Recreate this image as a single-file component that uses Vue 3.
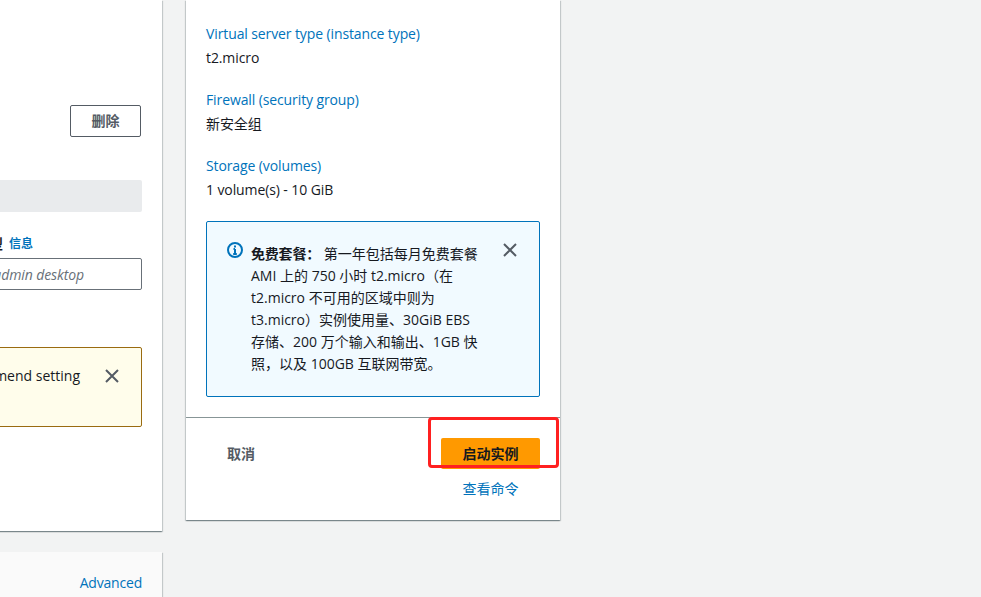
<script setup>
const summary = [
    { label: "Virtual server type (instance type)", value: "t2.micro" },
    { label: "Firewall (security group)", value: "新安全组" },
    { label: "Storage (volumes)", value: "1 volume(s) - 10 GiB" },
];
</script>

<template>
    <div class="page">
        <div class="left">
            <div class="left-inner">
                <section class="card main-card">
                    <div class="delete-row">
                        <button class="btn-outline">删除</button>
                    </div>
                    <div class="gray-bar"></div>
                    <div class="field-label">
                        <span>描述类型</span>
                        <a class="info-link">信息</a>
                    </div>
                    <input class="text-input" placeholder="e.g. admin desktop" />
                    <div class="warning">
                        <span class="warning-text">We recommend setting</span>
                        <svg class="close" viewBox="0 0 16 16" width="16" height="16">
                            <path d="M2 2l12 12M14 2L2 14" />
                        </svg>
                    </div>
                </section>
                <section class="card advanced-card">
                    <a class="advanced-link">Advanced</a>
                </section>
            </div>
        </div>

        <aside class="card summary">
            <div class="summary-body">
                <div v-for="item in summary" :key="item.label" class="summary-item">
                    <a class="summary-label">{{ item.label }}</a>
                    <div class="summary-value">{{ item.value }}</div>
                </div>
                <div class="free-tier">
                    <svg class="info-icon" viewBox="0 0 16 16" width="16" height="16">
                        <circle cx="8" cy="8" r="7" />
                        <path d="M8 7v5M6.2 12h3.6M6.5 7H8" />
                        <path class="dot" d="M7 3.5h2v2H7z" />
                    </svg>
                    <p class="free-text">
                        <strong>免费套餐：</strong> 第一年包括每月免费套餐 AMI 上的 750 小时 t2.micro（在 t2.micro 不可用的区域中则为 t3.micro）实例使用量、30GiB EBS 存储、200 万个输入和输出、1GB 快照，以及 100GB 互联网带宽。
                    </p>
                    <svg class="close" viewBox="0 0 16 16" width="16" height="16">
                        <path d="M2 2l12 12M14 2L2 14" />
                    </svg>
                </div>
            </div>
            <div class="summary-footer">
                <a class="cancel">取消</a>
                <div class="launch">
                    <button class="btn-primary">启动实例</button>
                    <a class="preview">查看命令</a>
                </div>
            </div>
            <div class="red-mark"></div>
        </aside>
    </div>
</template>

<style>
html,
body {
    margin: 0;
    background: #f2f3f3;
}
</style>

<style scoped>
.page {
    display: flex;
    align-items: flex-start;
    gap: 24px;
    height: 597px;
    overflow: hidden;
    background: #f2f3f3;
    font-family: "Open Sans", "Noto Sans CJK SC", sans-serif;
    font-size: 14px;
    line-height: 22px;
    color: #16191f;
}

.card {
    background: #fff;
    box-shadow: 0 1px 1px 0 rgba(0, 28, 36, 0.3), 1px 1px 1px 0 rgba(0, 28, 36, 0.15), -1px 1px 1px 0 rgba(0, 28, 36, 0.15);
}

.left {
    width: 162px;
    flex: none;
}

.left-inner {
    width: 400px;
    margin-left: -238px;
}

.main-card {
    height: 531px;
    box-sizing: border-box;
    padding: 105px 20px 0;
}

.delete-row {
    display: flex;
    justify-content: flex-end;
    padding-right: 1px;
}

.btn-outline {
    width: 71px;
    height: 32px;
    border: 1px solid #545b64;
    border-radius: 2px;
    background: #fff;
    color: #545b64;
    font: inherit;
    font-weight: 700;
}

.gray-bar {
    height: 32px;
    margin-top: 43px;
    background: #e9ebed;
    border-radius: 2px;
}

.field-label {
    display: flex;
    justify-content: flex-end;
    align-items: center;
    gap: 6px;
    height: 22px;
    margin-top: 21px;
    padding-right: 109px;
    white-space: nowrap;
    font-weight: 700;
}

.info-link {
    color: #0073bb;
    font-size: 12px;
}

.text-input {
    display: block;
    width: 100%;
    height: 32px;
    box-sizing: border-box;
    margin-top: 3px;
    padding: 0 57px 0 8px;
    border: 1px solid #687078;
    border-radius: 2px;
    font: inherit;
    text-align: right;
    letter-spacing: -0.1px;
}

.text-input::placeholder {
    color: #687078;
    font-style: italic;
    opacity: 1;
}

.warning {
    display: flex;
    justify-content: flex-end;
    gap: 24px;
    height: 80px;
    box-sizing: border-box;
    margin-top: 57px;
    padding: 17px 21px 0 0;
    background: #fffdeb;
    border: 1px solid #9a6b10;
    border-radius: 2px;
}

.warning .close {
    margin-top: 3px;
}

.close {
    flex: none;
    fill: none;
    stroke: #545b64;
    stroke-width: 2;
}

.advanced-card {
    display: flex;
    justify-content: flex-end;
    height: 60px;
    box-sizing: border-box;
    margin-top: 21px;
    padding: 20px 20px 0;
    background: #fafafa;
}

.advanced-link {
    color: #0073bb;
    letter-spacing: -0.2px;
}

.summary {
    position: relative;
    width: 374px;
    height: 520px;
    flex: none;
    display: flex;
    flex-direction: column;
}

.summary-body {
    height: 418px;
    box-sizing: border-box;
    padding: 23px 20px 0;
    border-bottom: 1px solid #879596;
}

.summary-item {
    height: 66px;
}

.summary-label {
    color: #0073bb;
    letter-spacing: -0.11px;
}

.summary-value {
    margin-top: 2px;
    letter-spacing: -0.1px;
}

.free-tier {
    display: flex;
    align-items: flex-start;
    gap: 8px;
    height: 176px;
    box-sizing: border-box;
    padding: 20px 22px 0 20px;
    background: #f1faff;
    border: 1px solid #0073bb;
    border-radius: 2px;
}

.info-icon {
    flex: none;
    fill: none;
    stroke: #0073bb;
    stroke-width: 2;
}

.info-icon .dot {
    fill: #0073bb;
    stroke: none;
}

.free-text {
    margin: 1px 0 0;
    width: 230px;
    flex: none;
}

.free-text strong {
    letter-spacing: -0.2px;
}

.free-tier .close {
    margin-left: 13px;
}

.summary-footer {
    display: flex;
    justify-content: space-between;
    padding: 20px 20px 0 41px;
}

.cancel {
    margin-top: 5px;
    color: #545b64;
    font-weight: 700;
}

.launch {
    display: flex;
    flex-direction: column;
    align-items: center;
}

.btn-primary {
    width: 99px;
    height: 31px;
    border: none;
    border-radius: 2px;
    background: #ff9900;
    color: #16191f;
    font: inherit;
    font-weight: 700;
}

.preview {
    margin-top: 9px;
    color: #0073bb;
}

.red-mark {
    position: absolute;
    left: 242px;
    top: 417px;
    width: 131px;
    height: 51px;
    box-sizing: border-box;
    border: 3px solid #ff2020;
    border-radius: 4px;
}
</style>
